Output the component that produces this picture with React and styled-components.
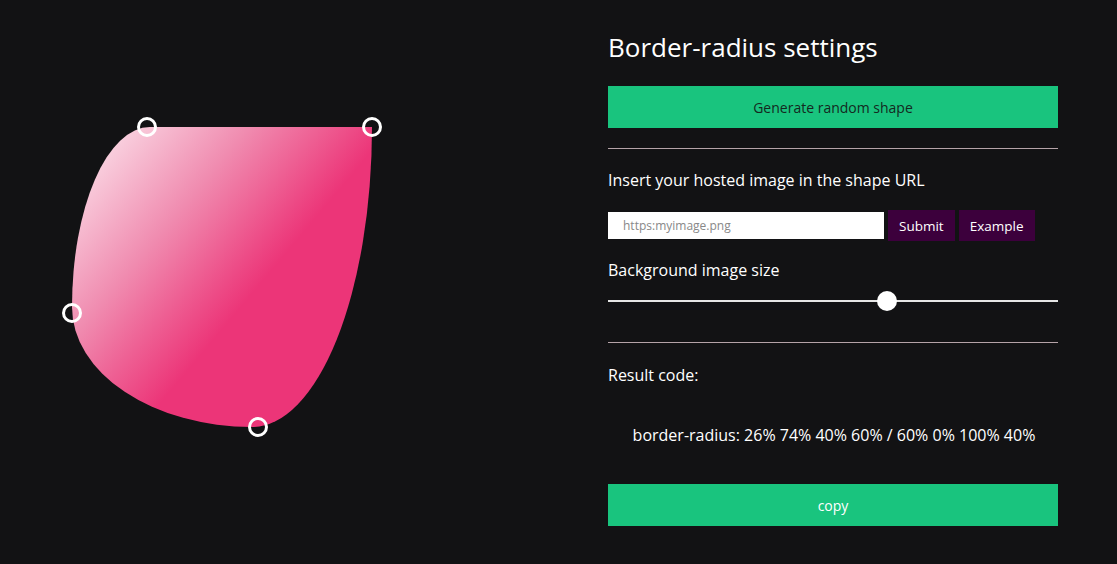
import React, { useState } from 'react';
import styled, { createGlobalStyle } from 'styled-components';

const GlobalStyle = createGlobalStyle`
  html, body {
    margin: 0;
    padding: 0;
    background: #121214;
    color: #ffffff;
    font-family: "Open Sans", "Noto Sans", sans-serif;
  }
  * { box-sizing: border-box; }
`;

const Page = styled.div`
  display: grid;
  grid-template-columns: 608px 450px;
  height: 564px;
`;

const Stage = styled.div`
  display: flex;
  align-items: center;
  padding-left: 72px;
  padding-bottom: 10px;
`;

const Shape = styled.div`
  position: relative;
  width: 300px;
  height: 300px;
`;

const Blob = styled.div`
  width: 100%;
  height: 100%;
  border-radius: 26% 74% 40% 60% / 60% 0% 100% 40%;
  background: linear-gradient(130deg, #fdeef3 0%, #f08cb0 32%, #ec3578 58%, #ec3578 100%);
`;

const Handle = styled.span`
  position: absolute;
  width: 20px;
  height: 20px;
  margin: -10px 0 0 -10px;
  border: 3px solid #ffffff;
  border-radius: 50%;
  background: transparent;
`;

const Panel = styled.section`
  display: flex;
  flex-direction: column;
  padding-top: 28px;
`;

const Title = styled.h1`
  margin: 0 0 20px;
  font-size: 26px;
  font-weight: 400;
  line-height: 38px;
`;

const GreenButton = styled.button`
  width: 100%;
  height: 42px;
  border: none;
  background: #19c47e;
  color: ${p => (p.$light ? '#ffffff' : '#14291f')};
  font-family: inherit;
  font-size: 14px;
`;

const Divider = styled.hr`
  width: 100%;
  margin: ${p => p.$m || '20px 0'};
  border: none;
  border-top: 1px solid #b5a3a8;
`;

const Label = styled.p`
  margin: 0;
  font-size: 16px;
  line-height: 22px;
`;

const UrlRow = styled.div`
  display: flex;
  align-items: center;
  gap: 4px;
  margin: 19px 0 18px;
`;

const UrlInput = styled.input`
  width: 276px;
  height: 27px;
  border: none;
  padding: 0 15px;
  font-family: inherit;
  font-size: 12px;
  color: #333;
  &::placeholder { color: #888; }
`;

const PurpleButton = styled.button`
  height: 31px;
  padding: 0 11px;
  border: none;
  background: #3c003c;
  color: #ffffff;
  font-family: inherit;
  font-size: 13.5px;
`;

const Range = styled.input`
  -webkit-appearance: none;
  appearance: none;
  width: 100%;
  height: 2px;
  margin: 19px 0 40px;
  background: #e6e6e6;
  outline: none;
  &::-webkit-slider-thumb {
    -webkit-appearance: none;
    width: 20px;
    height: 20px;
    border-radius: 50%;
    background: #ffffff;
    border: none;
  }
`;

const Code = styled.p`
  margin: 38px 0 38px;
  text-align: center;
  font-size: 16px;
  line-height: 22px;
  padding-left: 2px;
`;

export default function App() {
  const [size, setSize] = useState(62.5);
  return (
    <>
      <GlobalStyle />
      <Page>
        <Stage>
          <Shape>
            <Blob />
            <Handle style={{ left: 75, top: 0 }} />
            <Handle style={{ left: 300, top: 0 }} />
            <Handle style={{ left: 0, top: 186 }} />
            <Handle style={{ left: 186, top: 300 }} />
          </Shape>
        </Stage>
        <Panel>
          <Title>Border-radius settings</Title>
          <GreenButton>Generate random shape</GreenButton>
          <Divider />
          <Label>Insert your hosted image in the shape URL</Label>
          <UrlRow>
            <UrlInput placeholder="https:myimage.png" />
            <PurpleButton>Submit</PurpleButton>
            <PurpleButton>Example</PurpleButton>
          </UrlRow>
          <Label>Background image size</Label>
          <Range type="range" min="0" max="100" step="0.5" value={size} onChange={e => setSize(e.target.value)} />
          <Divider $m="0 0 21px" />
          <Label>Result code:</Label>
          <Code>border-radius: 26% 74% 40% 60% / 60% 0% 100% 40%</Code>
          <GreenButton $light>copy</GreenButton>
        </Panel>
      </Page>
    </>
  );
}
